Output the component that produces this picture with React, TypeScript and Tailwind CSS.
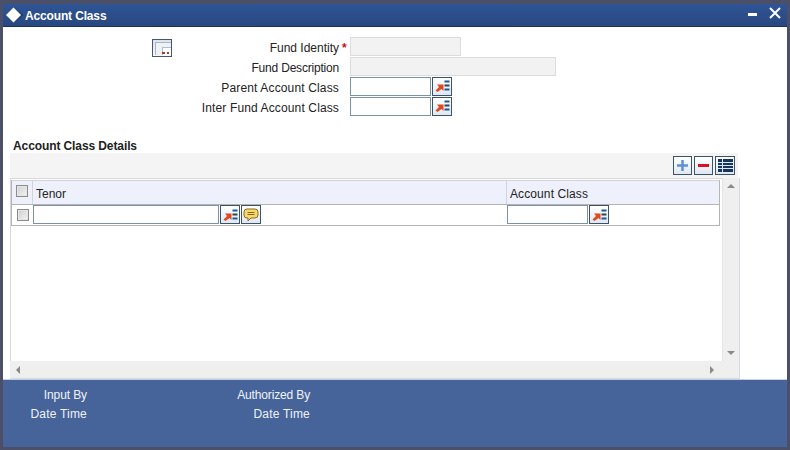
const LovIcon = () => (
  <svg width="16" height="14" viewBox="0 0 16 14">
    <path d="M3 5.5 H9.5 V12 L7.5 10 L3.5 13 L1.5 11.5 L5 8 Z" fill="#e0481f" />
    <rect x="10.5" y="1.5" width="5" height="2" fill="#1c5a96" />
    <rect x="10.5" y="5.5" width="5" height="2" fill="#33424f" />
    <rect x="10.5" y="9.5" width="5" height="2" fill="#1c5a96" />
  </svg>
);

const IconButton = ({ children, className = "" }: { children: React.ReactNode; className?: string }) => (
  <button
    type="button"
    className={`flex h-[19px] items-center justify-center border border-[#3d5268] bg-gradient-to-b from-white to-[#dfe8f3] ${className}`}
  >
    {children}
  </button>
);

const Check = () => (
  <span className="block h-[12px] w-[12px] border border-[#8c8c8c] bg-gradient-to-br from-[#cfcfcf] to-[#f4f4f4] shadow-[inset_0_0_0_1px_#e6e6e6]" />
);

const FormRow = ({
  label,
  required,
  labelClass = "",
  children,
}: {
  label: string;
  required?: boolean;
  labelClass?: string;
  children: React.ReactNode;
}) => (
  <div className="flex h-[20px] items-center">
    <label className={`w-[169px] pt-[3px] text-right text-[12px] text-[#222] ${labelClass}`}>{label}</label>
    <span className="h-[20px] w-[11px] pt-[2px] pl-[3px] text-[12px] leading-[20px] font-bold text-[#c80f1e]">
      {required ? "*" : ""}
    </span>
    {children}
  </div>
);

const TextInput = ({ className = "" }: { className?: string }) => (
  <input type="text" className={`h-[19px] border border-[#7b93a8] bg-white ${className}`} />
);

const ReadOnly = ({ className = "" }: { className?: string }) => (
  <div className={`h-[19px] border border-[#dcdcdc] bg-[#f2f2f2] ${className}`} />
);

const App = () => {
  return (
    <div className="flex h-[450px] w-[790px] flex-col bg-[#4b5068] pt-[4px] pr-[3px] pb-[3px] pl-[3px] font-['Liberation_Sans',Arial,sans-serif]">
      {/* Title bar */}
      <div className="flex h-[23px] shrink-0 items-center border-b border-[#1c3358] bg-gradient-to-b from-[#2f5596] to-[#28477f] pl-[3px] pr-[6px]">
        <svg width="18" height="16" viewBox="0 0 18 16" className="mr-px">
          <path d="M8 0 L17 8 L8 16 L16 8 Z" fill="#16294a" />
          <path d="M7.5 0.5 L15 8 L7.5 15.5 L0 8 Z" fill="#ffffff" />
        </svg>
        <span className="pt-px text-[12px] font-bold tracking-[-0.15px] text-white">Account Class</span>
        <div className="ml-auto flex items-start gap-[12px]">
          <span className="mt-[6px] block h-[3px] w-[9px] bg-white" />
          <svg width="12" height="12" viewBox="0 0 12 12" className="mb-[4px]">
            <path d="M1 1 L11 11 M11 1 L1 11" stroke="#ffffff" strokeWidth="2" />
          </svg>
        </div>
      </div>

      {/* Body */}
      <div className="min-h-0 flex-1 bg-white pl-[7px]">
        <div className="flex pt-[9px] pl-[142px]">
          <button
            type="button"
            className="relative mt-[3px] h-[18px] w-[20px] shrink-0 border border-[#46566c] bg-gradient-to-b from-[#dde3eb] to-[#f8f9fb]"
          >
            <span className="absolute top-[2px] left-[2px] h-[13px] w-[16px] border-t border-l border-[#aab4c2] bg-[#eef1f5]" />
            <span className="absolute top-[7px] left-[9px] h-[8px] w-[9px] border-t border-l border-[#b4bcc8] bg-white" />
            <span className="absolute right-[2px] bottom-[2px] h-[2px] w-[2px] bg-[#a8392c]" />
            <span className="absolute right-[6px] bottom-[2px] h-[2px] w-[3px] bg-[#a8392c]" />
          </button>
          <div className="-ml-[2px] flex flex-col">
            <FormRow label="Fund Identity" required>
              <ReadOnly className="w-[111px]" />
            </FormRow>
            <FormRow label="Fund Description" labelClass="tracking-[-0.2px]">
              <ReadOnly className="w-[206px]" />
            </FormRow>
            <FormRow label="Parent Account Class" labelClass="tracking-[0.15px]">
              <TextInput className="w-[81px]" />
              <IconButton className="ml-px w-[20px]">
                <LovIcon />
              </IconButton>
            </FormRow>
            <FormRow label="Inter Fund Account Class" labelClass="tracking-[0.13px]">
              <TextInput className="w-[81px]" />
              <IconButton className="ml-px w-[20px]">
                <LovIcon />
              </IconButton>
            </FormRow>
          </div>
        </div>

        <h2 className="mt-[23px] pl-[3px] text-[12px] leading-[14px] font-bold tracking-[-0.1px] text-[#222]">
          Account Class Details
        </h2>

        {/* Toolbar */}
        <div className="flex h-[25px] w-[728px] items-center justify-end gap-[2px] bg-[#f4f4f4] pr-[3px]">
          <IconButton className="w-[19px]">
            <svg width="13" height="13" viewBox="0 0 13 13">
              <path d="M6.5 1 V12 M1 6.5 H12" stroke="#5f8fdc" strokeWidth="2.5" />
            </svg>
          </IconButton>
          <IconButton className="w-[19px]">
            <span className="block h-[3px] w-[11px] bg-[#dc1020]" />
          </IconButton>
          <IconButton className="w-[20px]">
            <svg width="15" height="13" viewBox="0 0 15 13">
              <rect width="15" height="13" fill="#17365c" />
              <path d="M0 3.5 H15 M0 6.5 H15 M0 9.5 H15" stroke="#d8e8f4" strokeWidth="1" />
              <path d="M4.5 0 V13" stroke="#d8e8f4" strokeWidth="1" />
            </svg>
          </IconButton>
        </div>

        {/* Grid */}
        <div className="flex h-[201px] w-[730px] flex-col border-r border-b border-[#d3dae6]">
          <div className="flex min-h-0 flex-1">
            <div className="min-w-0 flex-1 border-t border-l border-[#d8d8d8] pt-px">
              <div className="flex h-[25px] w-[709px] border-x border-b border-[#b4b4b4] border-t border-t-[#d0d4de] bg-[#eef1fb]">
                <div className="flex w-[21px] shrink-0 items-start justify-center border-r border-[#d0d4de] pt-[4px]">
                  <Check />
                </div>
                <div className="flex w-[474px] shrink-0 items-center border-r border-[#d0d4de] pl-[3px] pt-[2px] text-[12px] text-[#222]">
                  Tenor
                </div>
                <div className="flex flex-1 items-center pl-[3px] pt-[2px] text-[12px] tracking-[0.1px] text-[#222]">
                  Account Class
                </div>
              </div>
              <div className="flex h-[21px] w-[709px] items-start border-x border-b border-[#b4b4b4]">
                <div className="flex h-[19px] w-[21px] shrink-0 items-center justify-center">
                  <Check />
                </div>
                <div className="flex w-[474px] shrink-0 items-center">
                  <TextInput className="w-[186px]" />
                  <IconButton className="ml-px w-[20px]">
                    <LovIcon />
                  </IconButton>
                  <IconButton className="ml-px w-[20px]">
                    <svg width="16" height="14" viewBox="0 0 16 14">
                      <path
                        d="M4 1 H12 Q15 1 15 4 V7 Q15 10 12 10 H8 L5 13 V10 H4 Q1 10 1 7 V4 Q1 1 4 1 Z"
                        fill="#f6d870"
                        stroke="#8a6a1c"
                        strokeWidth="1"
                      />
                      <path d="M4.5 4.5 H11.5 M4.5 6.5 H11.5" stroke="#8a6a1c" strokeWidth="1" />
                    </svg>
                  </IconButton>
                </div>
                <div className="flex flex-1 items-center">
                  <TextInput className="w-[81px]" />
                  <IconButton className="ml-px w-[20px]">
                    <LovIcon />
                  </IconButton>
                </div>
              </div>
            </div>
            {/* Vertical scrollbar */}
            <div className="flex w-[17px] shrink-0 flex-col items-center justify-between border-l border-[#e6e6e6] bg-[#efefef] py-[6px]">
              <span className="h-0 w-0 border-x-[4px] border-b-[4px] border-x-transparent border-b-[#8a8a8a]" />
              <span className="h-0 w-0 border-x-[4px] border-t-[4px] border-x-transparent border-t-[#8a8a8a]" />
            </div>
          </div>
          {/* Horizontal scrollbar */}
          <div className="flex h-[17px] shrink-0 items-center justify-between bg-[#efefef] pr-[25px] pl-[6px]">
            <span className="h-0 w-0 border-y-[4px] border-r-[4px] border-y-transparent border-r-[#8a8a8a]" />
            <span className="h-0 w-0 border-y-[4px] border-l-[4px] border-y-transparent border-l-[#8a8a8a]" />
          </div>
        </div>
      </div>

      {/* Footer */}
      <div className="grid h-[68px] shrink-0 grid-cols-[84px_223px] content-start gap-y-[2px] border-t border-[#c4d2e6] bg-[#46639a] pt-[7px] text-right text-[12px] leading-[17px] text-[#f0f4fa]">
        <span className="tracking-[-0.1px]">Input By</span>
        <span className="tracking-[-0.15px]">Authorized By</span>
        <span className="tracking-[0.2px]">Date Time</span>
        <span className="tracking-[0.2px]">Date Time</span>
      </div>
    </div>
  );
};

export default App;
